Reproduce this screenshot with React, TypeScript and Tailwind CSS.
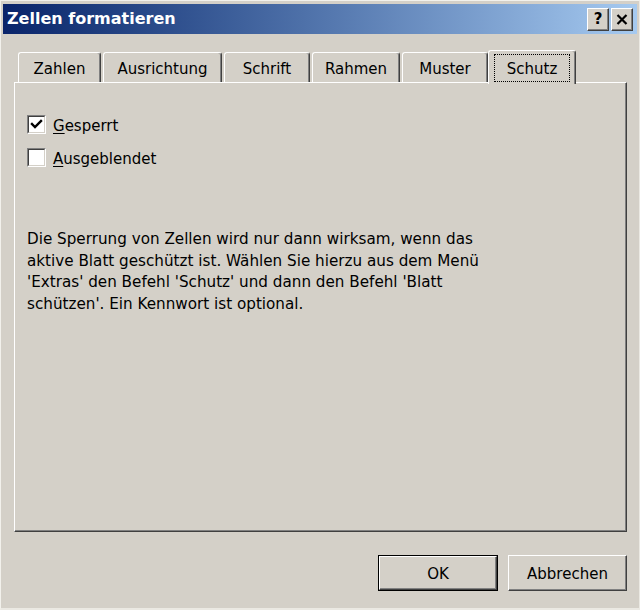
const font = "font-['DejaVu_Sans','Liberation_Sans',sans-serif]"

const tabs = [
  { label: 'Zahlen', w: 'w-[83px]' },
  { label: 'Ausrichtung', w: 'w-[119px]' },
  { label: 'Schrift', w: 'w-[86px]' },
  { label: 'Rahmen', w: 'w-[88px]' },
  { label: 'Muster', w: 'w-[86px]' },
]

function TitleButton({ children }: { children: React.ReactNode }) {
  return (
    <div className="w-[22px] h-[23px] bg-[#d4d0c8] border border-t-white border-l-white border-r-[#404040] border-b-[#404040] shadow-[inset_-1px_-1px_0_#808080] flex items-center justify-center">
      {children}
    </div>
  )
}

function Checkbox({ checked, label }: { checked?: boolean; label: React.ReactNode }) {
  return (
    <div className="flex items-center h-[19px] gap-[7px]">
      <div className="w-[19px] h-[19px] border border-t-[#808080] border-l-[#808080] border-r-white border-b-white">
        <div className="w-full h-full bg-white border border-t-[#404040] border-l-[#404040] border-r-[#d4d0c8] border-b-[#d4d0c8] flex items-center justify-center">
          {checked && (
            <svg width="13" height="13" viewBox="0 0 13 13">
              <path d="M2 6 L5 9 L11 3" fill="none" stroke="#000" strokeWidth="2.4" strokeLinecap="square" />
            </svg>
          )}
        </div>
      </div>
      <span className="text-[15px] leading-none text-black pt-[3px]">{label}</span>
    </div>
  )
}

export default function App() {
  return (
    <div className={`${font} w-[640px] h-[610px] bg-[#d4d0c8] border-t border-l border-[#f2f1ec] border-r border-b-2 border-r-[#ebe9e3] border-b-[#ebe9e3] pt-[3px] px-[2px] flex flex-col text-black`}>
      {/* Title bar */}
      <div className="h-[30px] bg-gradient-to-r from-[#0a246a] to-[#a6caf0] flex items-center pl-[4px] pr-[4px]">
        <span className="text-white font-bold text-[16px] leading-none">Zellen formatieren</span>
        <div className="ml-auto flex gap-[2px]">
          <TitleButton>
            <span className="text-[15px] font-bold leading-none">?</span>
          </TitleButton>
          <TitleButton>
            <svg width="12" height="11" viewBox="0 0 12 11">
              <path d="M1.5 1 L10.5 10 M10.5 1 L1.5 10" stroke="#000" strokeWidth="2.2" />
            </svg>
          </TitleButton>
        </div>
      </div>

      {/* Tabs */}
      <div className="mt-[16px] ml-[13px] h-[32px] flex items-end">
        {tabs.map((t) => (
          <div
            key={t.label}
            className={`${t.w} ml-[2px] h-[30px] pt-[4px] rounded-t-[3px] border-t border-l border-r border-t-white border-l-white border-r-[#404040] shadow-[inset_-1px_0_0_#808080] flex items-center justify-center text-[15px] leading-none`}
          >
            {t.label}
          </div>
        ))}
        <div className="relative z-10 w-[88px] h-[34px] -mb-[2px] bg-[#d4d0c8] rounded-t-[3px] border-t border-l border-r border-t-white border-l-white border-r-[#404040] shadow-[inset_-1px_0_0_#808080] flex items-start justify-center pt-[3px]">
          <div className="w-[76px] h-[28px] pt-[3px] border border-dotted border-black flex items-center justify-center text-[15px] leading-none">
            Schutz
          </div>
        </div>
      </div>

      {/* Panel */}
      <div className="ml-[11px] w-[613px] h-[450px] border-t border-l border-white border-r border-b border-r-[#404040] border-b-[#404040] shadow-[inset_-1px_-1px_0_#808080] pl-[12px] pt-[32px]">
        <div className="flex flex-col gap-[14px]">
          <Checkbox
            checked
            label={
              <>
                <span className="underline underline-offset-2">G</span>esperrt
              </>
            }
          />
          <Checkbox
            label={
              <>
                <span className="underline underline-offset-2">A</span>usgeblendet
              </>
            }
          />
        </div>
        <p className="mt-[62px] text-[15.2px] leading-[21.5px]">
          Die Sperrung von Zellen wird nur dann wirksam, wenn das
          <br />
          aktive Blatt geschützt ist. Wählen Sie hierzu aus dem Menü
          <br />
          'Extras' den Befehl 'Schutz' und dann den Befehl 'Blatt
          <br />
          schützen'. Ein Kennwort ist optional.
        </p>
      </div>

      {/* Buttons */}
      <div className="ml-[11px] w-[613px] mt-[23px] flex justify-end gap-[10px]">
        <div className="w-[120px] h-[36px] border border-black">
          <div className="w-full h-full pt-[2px] border border-t-white border-l-white border-r-[#404040] border-b-[#404040] shadow-[inset_-1px_-1px_0_#808080] flex items-center justify-center text-[15px] leading-none">
            OK
          </div>
        </div>
        <div className="w-[119px] h-[36px] pt-[2px] border border-t-white border-l-white border-r-[#404040] border-b-[#404040] shadow-[inset_-1px_-1px_0_#808080] flex items-center justify-center text-[15px] leading-none">
          Abbrechen
        </div>
      </div>
    </div>
  )
}
